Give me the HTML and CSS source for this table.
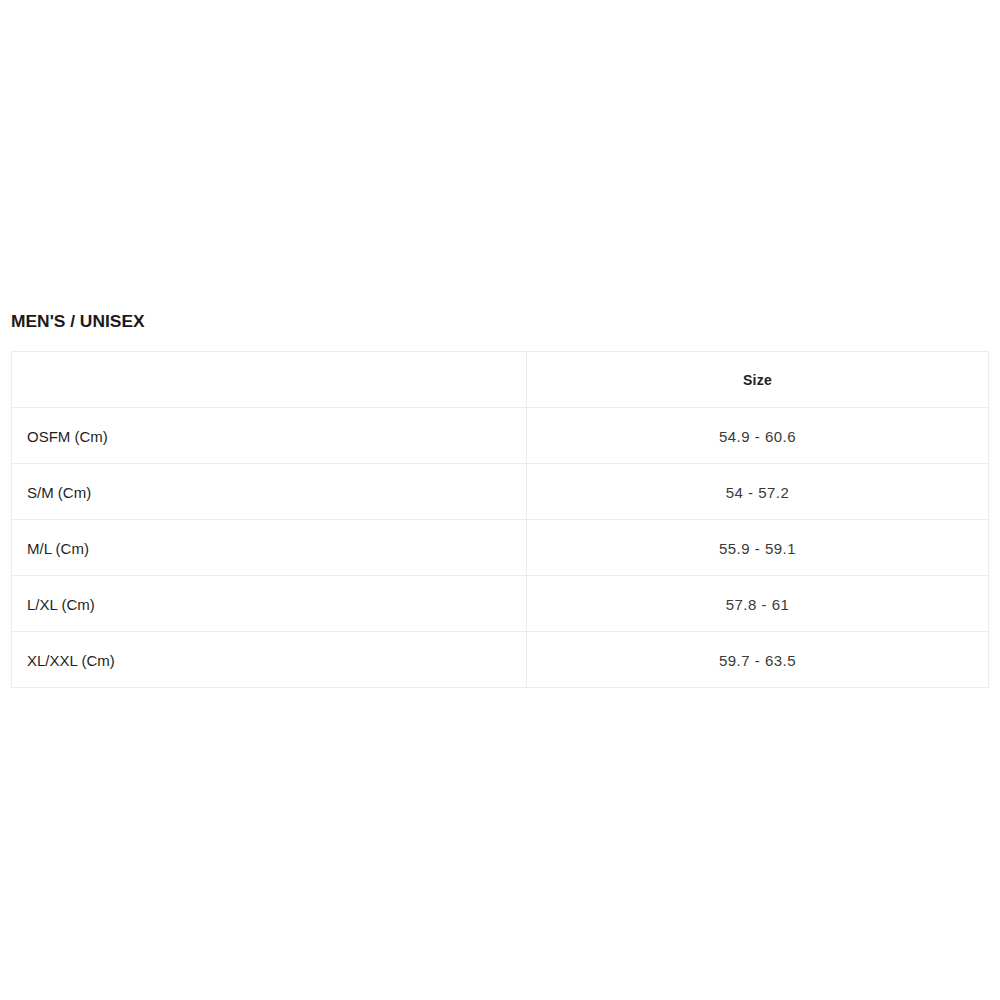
FILE: index.html
```html
<!DOCTYPE html>
<html>
<head>
<meta charset="utf-8">
<link rel="stylesheet" href="styles.css">
</head>
<body>
<div class="page">
  <h2 class="title">MEN'S / UNISEX</h2>
  <table class="sizes">
    <thead>
      <tr><th class="label"></th><th class="value">Size</th></tr>
    </thead>
    <tbody>
      <tr><td class="label">OSFM (Cm)</td><td class="value">54.9 - 60.6</td></tr>
      <tr><td class="label">S/M (Cm)</td><td class="value">54 - 57.2</td></tr>
      <tr><td class="label">M/L (Cm)</td><td class="value">55.9 - 59.1</td></tr>
      <tr><td class="label">L/XL (Cm)</td><td class="value">57.8 - 61</td></tr>
      <tr><td class="label">XL/XXL (Cm)</td><td class="value">59.7 - 63.5</td></tr>
    </tbody>
  </table>
</div>
</body>
</html>
```
FILE: styles.css
```css
html, body {
  margin: 0;
  padding: 0;
  background: #fff;
}
body {
  font-family: "Liberation Sans", Arial, sans-serif;
  color: #222;
}
.page {
  padding: 311px 11px 0 11px;
}
.title {
  margin: 0 0 19px 0;
  font-size: 17.4px;
  line-height: 21px;
  font-weight: bold;
  color: #1a1a1a;
}
.sizes {
  width: 978px;
  border-collapse: collapse;
  table-layout: fixed;
}
.sizes th, .sizes td {
  border: 1px solid #ececec;
  height: 56px;
  padding: 1px 0 0 0;
  font-size: 15px;
  box-sizing: border-box;
}
.sizes .label {
  width: 515px;
  text-align: left;
  padding-left: 15px;
  color: #1f1f1f;
}
.sizes .value {
  text-align: center;
  color: #3a3a3a;
  letter-spacing: 0.5px;
}
.sizes th.value {
  font-weight: bold;
  color: #222;
  font-size: 14px;
  letter-spacing: 0.2px;
}
```
